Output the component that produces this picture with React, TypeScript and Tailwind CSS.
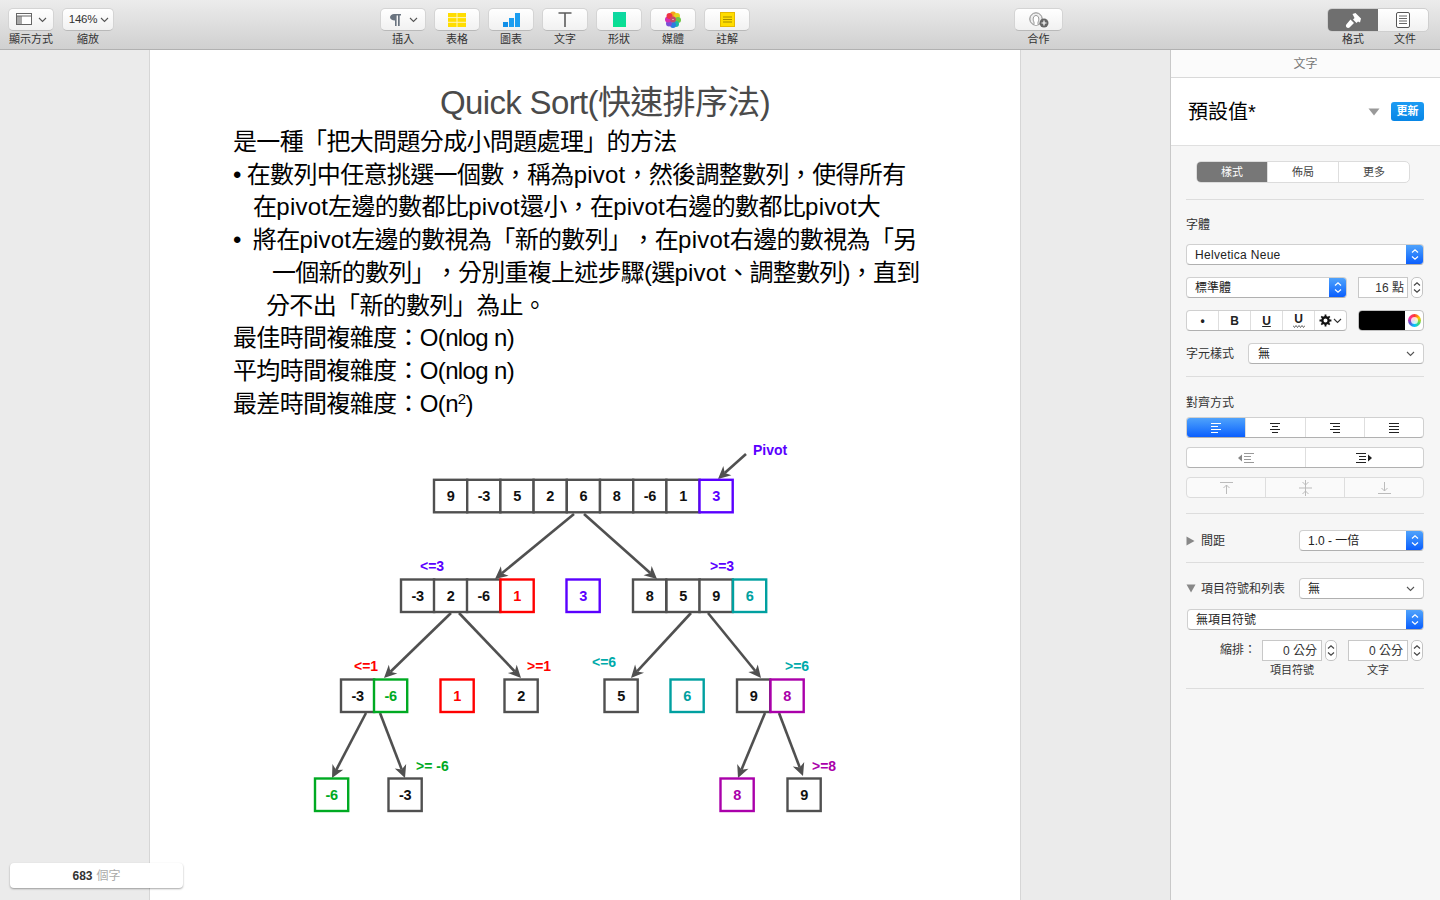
const Chevron = ({ className = "" }: { className?: string }) => (
  <svg width="9" height="6" viewBox="0 0 9 6" className={className}>
    <path d="M1 1l3.5 3.5L8 1" fill="none" stroke="currentColor" strokeWidth="1.1" />
  </svg>
);

const UpDown = ({ color = "#fff" }: { color?: string }) => (
  <svg width="8" height="13" viewBox="0 0 8 13">
    <path d="M1 4.5L4 1.8 7 4.5M1 8.5L4 11.2 7 8.5" fill="none" stroke={color} strokeWidth="1.2" />
  </svg>
);

const ToolButton = ({ label, children, w = "w-[46px]" }: { label: string; children: React.ReactNode; w?: string }) => (
  <div className={`flex flex-col items-center ${w}`}>
    <div className="flex h-[23px] w-full items-center justify-center gap-1 rounded-[5px] border border-[#d4d4d4] border-b-[#b9b9b9] bg-gradient-to-b from-white to-[#f1f1f1]">
      {children}
    </div>
    <span className="mt-[1px] whitespace-nowrap text-[11px] leading-[15px] text-[#333]">{label}</span>
  </div>
);

const Toolbar = () => (
  <div className="flex h-[50px] shrink-0 border-b border-[#b1b1b1] bg-gradient-to-b from-[#ececec] to-[#d0d0d0] pt-2 pl-2">
    <ToolButton label="顯示方式">
      <svg width="18" height="13" viewBox="0 0 18 13">
        <rect x="0.5" y="0.5" width="15" height="11" fill="#fff" stroke="#666" />
        <rect x="1" y="3" width="5" height="8" fill="#a9a9a9" />
        <path d="M1 3h14" stroke="#666" />
      </svg>
      <Chevron className="text-[#555]" />
    </ToolButton>
    <div className="ml-2">
      <ToolButton label="縮放" w="w-[52px]">
        <span className="ml-[2px] text-[11.500px] tracking-[-0.2px] text-[#333]">146%</span>
        <Chevron className="-ml-[1px] text-[#555]" />
      </ToolButton>
    </div>
    <div className="ml-[266px] flex gap-2">
      <ToolButton label="插入">
        <svg width="13" height="14" viewBox="0 0 13 14">
          <path d="M5 1h7v1.6h-1.3V13H9V2.6H7.6V13H6V7.4C3 7.4 1 6 1 4.2S3 1 5 1z" fill="#6a7480" />
        </svg>
        <Chevron className="ml-[3px] text-[#555]" />
      </ToolButton>
      <ToolButton label="表格">
        <svg width="18" height="14" viewBox="0 0 18 14">
          <rect width="18" height="14" fill="#ffdd00" />
          <path d="M0 4.6h18M0 9.3h18M9 0v14" stroke="#fff6b8" strokeWidth="1" />
        </svg>
      </ToolButton>
      <ToolButton label="圖表">
        <svg width="17" height="14" viewBox="0 0 17 14">
          <rect x="0" y="9" width="5" height="5" fill="#118fe8" />
          <rect x="6" y="5" width="5" height="9" fill="#1b9df0" />
          <rect x="12" y="0" width="5" height="14" fill="#1b9df0" />
        </svg>
      </ToolButton>
      <ToolButton label="文字">
        <svg width="14" height="15" viewBox="0 0 14 15">
          <path d="M0.5 1h13M7 1v14" stroke="#5c5c5c" strokeWidth="1.6" fill="none" />
        </svg>
      </ToolButton>
      <ToolButton label="形狀">
        <div className="h-[15px] w-[13px] bg-gradient-to-b from-[#0fd6a4] to-[#08e08f]" />
      </ToolButton>
      <ToolButton label="媒體">
        <svg width="16" height="17" viewBox="0 0 16 17">
          <circle cx="8" cy="3.5" r="3" fill="#f7a21b" />
          <circle cx="12" cy="5" r="3" fill="#e4d51f" />
          <circle cx="13" cy="9" r="3" fill="#6cc644" />
          <circle cx="11" cy="13" r="3" fill="#1fb6a6" />
          <circle cx="8" cy="14" r="3" fill="#2a7de1" />
          <circle cx="4" cy="12.5" r="3" fill="#7a4fd6" />
          <circle cx="3" cy="8.5" r="3" fill="#d32fb2" />
          <circle cx="4.5" cy="5" r="3" fill="#ee3344" />
          <circle cx="8" cy="8.5" r="3" fill="#c4486a" />
          <circle cx="8" cy="8.5" r="0.6" fill="#fff" />
        </svg>
      </ToolButton>
      <ToolButton label="註解">
        <svg width="15" height="15" viewBox="0 0 15 15">
          <rect x="0.5" y="0.5" width="14" height="14" fill="#ffdd00" stroke="#e6b800" />
          <path d="M3 5h9M3 7.5h9M3 10h9" stroke="#8f7a00" strokeWidth="0.8" />
        </svg>
      </ToolButton>
    </div>
    <div className="ml-[264px]">
      <ToolButton label="合作" w="w-[49px]">
        <svg width="20" height="16" viewBox="0 0 20 16">
          <circle cx="7" cy="7" r="6.2" fill="#eee" stroke="#888" />
          <path d="M5 13V10C3.5 8 4 3.5 7 3.5s3.5 4.5 2 6.500V13" fill="#fff" stroke="#999" />
          <circle cx="15" cy="11" r="4.500" fill="#666" />
          <path d="M12.500 11h5M15 8.500v5" stroke="#fff" strokeWidth="1.2" />
        </svg>
      </ToolButton>
    </div>
    <div className="ml-[264px] flex flex-col">
      <div className="flex h-[24px] w-[102px] overflow-hidden rounded-[5px] border border-[#cfcfcf] bg-gradient-to-b from-white to-[#f1f1f1]">
        <div className="flex w-[50px] items-center justify-center bg-[#6f6f6f]">
          <svg width="17" height="15" viewBox="0 0 17 15">
            <path d="M7.500 1l3-1 5.500 5.500-1 4-2-1-1.500 1.500-3.500-3.500 1.500-1.500zM5.500 6.500l3.500 3.500-4.500 4.500c-1 .8-2.200.6-3-.3-.8-1-.8-2 0-3z" fill="#fff" />
          </svg>
        </div>
        <div className="flex flex-1 items-center justify-center">
          <svg width="14" height="16" viewBox="0 0 14 16">
            <rect x="0.5" y="0.5" width="13" height="15" rx="1.500" fill="#fff" stroke="#555" />
            <path d="M3 4h8M3 6.500h8M3 9h8M3 11.500h8" stroke="#666" />
          </svg>
        </div>
      </div>
      <div className="flex w-[104px] text-[11px] leading-[15px] text-[#333]">
        <span className="w-[52px] text-center">格式</span>
        <span className="w-[52px] text-center">文件</span>
      </div>
    </div>
  </div>
);

// "pivot" runs a bit wider than the CJK around it
const Pv = () => <span className="tracking-[0.2px]">pivot</span>;

const GREY = "#505050";
const PURPLE = "#5a00ff";
const RED = "#ff0000";
const TEAL = "#00a0a0";
const GREEN = "#00aa22";
const MAGENTA = "#aa00aa";

type Cell = { x: number; y: number; t: string; c?: string };

const cells: Cell[] = [
  ...["9", "-3", "5", "2", "6", "8", "-6", "1"].map((t, i) => ({ x: 434 + i * 33.2, y: 479.8, t })),
  { x: 699.5, y: 479.8, t: "3", c: PURPLE },
  { x: 401, y: 579.5, t: "-3" },
  { x: 434, y: 579.5, t: "2" },
  { x: 467, y: 579.5, t: "-6" },
  { x: 500.5, y: 579.5, t: "1", c: RED },
  { x: 566.5, y: 579.5, t: "3", c: PURPLE },
  { x: 633, y: 579.5, t: "8" },
  { x: 666.5, y: 579.5, t: "5" },
  { x: 699.5, y: 579.5, t: "9" },
  { x: 733, y: 579.5, t: "6", c: TEAL },
  { x: 341, y: 679.5, t: "-3" },
  { x: 374, y: 679.5, t: "-6", c: GREEN },
  { x: 440.5, y: 679.5, t: "1", c: RED },
  { x: 504.5, y: 679.5, t: "2" },
  { x: 604.5, y: 679.5, t: "5" },
  { x: 670.5, y: 679.5, t: "6", c: TEAL },
  { x: 737, y: 679.5, t: "9" },
  { x: 770.5, y: 679.5, t: "8", c: MAGENTA },
  { x: 315, y: 778.5, t: "-6", c: GREEN },
  { x: 388.5, y: 778.5, t: "-3" },
  { x: 720.5, y: 778.5, t: "8", c: MAGENTA },
  { x: 787.5, y: 778.5, t: "9" },
];

const arrows = [
  [746, 454, 718, 479],
  [574, 514, 495, 579],
  [584, 514, 657, 579],
  [451, 613, 384, 678],
  [459, 613, 521, 678],
  [691, 613, 631, 678],
  [708, 613, 761, 678],
  [366, 713, 332, 778],
  [380, 713, 405, 778],
  [765, 713, 738, 778],
  [779, 713, 803, 776],
];

const notes = [
  { x: 753, y: 455, t: "Pivot", c: PURPLE },
  { x: 420, y: 570.5, t: "<=3", c: PURPLE },
  { x: 710, y: 570.5, t: ">=3", c: PURPLE },
  { x: 354, y: 670.5, t: "<=1", c: RED },
  { x: 527, y: 670.5, t: ">=1", c: RED },
  { x: 592, y: 666.5, t: "<=6", c: "#00aaaa" },
  { x: 785, y: 670.5, t: ">=6", c: "#00aaaa" },
  { x: 416, y: 770.5, t: ">= -6", c: GREEN },
  { x: 812, y: 770.5, t: ">=8", c: MAGENTA },
];

const Arrow = ({ a }: { a: number[] }) => {
  const [x1, y1, x2, y2] = a;
  const ang = Math.atan2(y2 - y1, x2 - x1);
  const head = (d: number) =>
    `${x2 - 14 * Math.cos(ang + d)},${y2 - 14 * Math.sin(ang + d)}`;
  const nx = x2 - 9 * Math.cos(ang);
  const ny = y2 - 9 * Math.sin(ang);
  return (
    <g>
      <line x1={x1} y1={y1} x2={nx} y2={ny} stroke={GREY} strokeWidth="2.6" />
      <polygon points={`${x2},${y2} ${head(0.45)} ${nx},${ny} ${head(-0.45)}`} fill={GREY} />
    </g>
  );
};

// the sort tree is a picture inside the document, viewBox keeps screen coordinates
const Diagram = () => (
  <svg width="870" height="400" viewBox="150 430 870 400" className="block font-['Liberation_Sans',sans-serif]">
    {arrows.map((a, i) => (
      <Arrow key={i} a={a} />
    ))}
    {[...cells]
      .sort((a, b) => (a.c ? 1 : 0) - (b.c ? 1 : 0))
      .map((c, i) => (
        <g key={i}>
          <rect x={c.x} y={c.y} width={33.2} height={32.5} fill="#fff" stroke={c.c ?? GREY} strokeWidth="2.4" />
          <text x={c.x + 16.6} y={c.y + 21} textAnchor="middle" fontSize="14.500" fontWeight="700" letterSpacing="-0.4" fill={c.c ?? "#111"}>
            {c.t}
          </text>
        </g>
      ))}
    {notes.map((n, i) => (
      <text key={i} x={n.x} y={n.y} fontSize="14" fontWeight="700" fill={n.c}>
        {n.t}
      </text>
    ))}
  </svg>
);

const Page = () => (
  <div className="h-full w-[872px] shrink-0 overflow-hidden border-x border-[#d6d6d6] bg-white">
    <div className="mt-[33px] pl-[40px] text-center text-[33px] leading-[40px] tracking-[-0.65px] text-[#4a4a4a]">
      Quick Sort(快速排序法)
    </div>
    <div className="mt-[3px] pl-[83px] text-[24px] leading-[32.700px] tracking-[-0.65px] text-black [text-spacing-trim:space-all]">
      <div className="whitespace-pre">是一種「把大問題分成小問題處理」的方法</div>
      <div className="whitespace-pre">• 在數列中任意挑選一個數，稱為<Pv />，然後調整數列，使得所有</div>
      <div className="whitespace-pre pl-[20px]">在<Pv />左邊的數都比<Pv />還小，在<Pv />右邊的數都比<Pv />大</div>
      <div className="whitespace-pre">•  將在<Pv />左邊的數視為「新的數列」，在<Pv />右邊的數視為「另</div>
      <div className="whitespace-pre pl-[39px] tracking-[-0.75px]">一個新的數列」，分別重複上述步驟(選<Pv />、調整數列)，直到</div>
      <div className="whitespace-pre pl-[33px]">分不出「新的數列」為止。</div>
      <div className="whitespace-pre">最佳時間複雜度：O(nlog n)</div>
      <div className="whitespace-pre">平均時間複雜度：O(nlog n)</div>
      <div className="whitespace-pre">
        最差時間複雜度：O(n<sup className="text-[15px] leading-none">2</sup>)
      </div>
    </div>
    <div className="mt-[10px]">
      <Diagram />
    </div>
  </div>
);

const Popup = ({ label, className = "", blue = true }: { label: string; className?: string; blue?: boolean }) => (
  <div className={`flex h-[21px] items-center overflow-hidden rounded-[4px] border border-[#d0d0d0] border-b-[#b0b0b0] bg-white text-[12px] text-[#222] ${className}`}>
    <span className="flex-1 pl-2 whitespace-nowrap">{label}</span>
    {blue ? (
      <div className="flex h-full w-[17px] items-center justify-center bg-gradient-to-b from-[#4fa2fb] to-[#0b5dfd]">
        <UpDown />
      </div>
    ) : (
      <Chevron className="mr-[8px] text-[#555]" />
    )}
  </div>
);

const Stepper = () => (
  <div className="flex h-[21px] w-[12px] items-center justify-center rounded-[5px] border border-[#c4c4c4] bg-white">
    <UpDown color="#444" />
  </div>
);

const Divider = ({ className = "" }: { className?: string }) => <div className={`h-px bg-[#dddddd] ${className}`} />;

const Seg = ({ children, className = "" }: { children?: React.ReactNode; className?: string }) => (
  <div className={`flex h-full flex-1 items-center justify-center border-l border-[#dedede] first:border-l-0 ${className}`}>
    {children}
  </div>
);

const AlignIcon = ({ d, color = "#222" }: { d: string; color?: string }) => (
  <svg width="12" height="10" viewBox="0 0 12 10">
    <path d={d} stroke={color} strokeWidth="1" fill="none" />
  </svg>
);

const Sidebar = () => (
  <div className="h-full w-[270px] shrink-0 overflow-hidden border-l border-[#c9c9c9] bg-[#f6f6f6]">
    <div className="flex h-[28px] items-center justify-center border-b border-[#d9d9d9] bg-[#fbfbfb] text-[12px] text-[#777]">文字</div>
    <div className="flex h-[68px] items-center border-b border-[#e0e0e0] bg-white pl-[17px] pr-[16px]">
      <span className="flex-1 text-[20px] text-black">預設值*</span>
      <svg width="12" height="8" viewBox="0 0 12 8" className="mr-[11px]">
        <path d="M0.500 0.500h11L6 7.500z" fill="#999" />
      </svg>
      <div className="flex h-[19px] w-[33px] items-center justify-center rounded-[3px] bg-gradient-to-b from-[#1c9bf3] to-[#0786e6] text-[11px] font-bold text-white">更新</div>
    </div>
    <div className="pl-[15px] pr-4">
      <div className="ml-[10px] mr-[14px] mt-[15px] flex h-[22px] overflow-hidden rounded-[5px] border border-[#dcdcdc] bg-white text-[11px] text-[#444]">
        <Seg className="bg-[#777] text-white">樣式</Seg>
        <Seg>佈局</Seg>
        <Seg>更多</Seg>
      </div>
      <Divider className="mt-[16px]" />
      <div className="mt-[16px] text-[12px] leading-[18px] text-[#333]">字體</div>
      <Popup label="Helvetica Neue" className="mt-[10px] tracking-[0.3px]" />
      <div className="mt-[12px] flex items-center">
        <Popup label="標準體" className="w-[161px]" />
        <div className="ml-[11px] flex h-[21px] w-[50px] items-center justify-end border border-[#c8c8c8] bg-white pr-[3px] text-[12px] text-[#333]">16 點</div>
        <div className="ml-[3px]"><Stepper /></div>
      </div>
      <div className="mt-[12px] flex items-center">
        <div className="flex h-[21px] w-[161px] overflow-hidden rounded-[4px] border border-[#d0d0d0] border-b-[#b0b0b0] bg-white text-[12px] font-bold text-[#222]">
          <Seg>•</Seg>
          <Seg>B</Seg>
          <Seg><span className="underline">U</span></Seg>
          <Seg>
            <span className="flex flex-col items-center leading-[11px]">
              U
              <svg width="12" height="3" viewBox="0 0 12 3">
                <path d="M0 .5l1.500 2L3 .5l1.500 2L6 .5l1.500 2L9 .5l1.500 2L12 .5" fill="none" stroke="#444" strokeWidth="0.8" />
              </svg>
            </span>
          </Seg>
          <Seg>
            <svg width="13" height="13" viewBox="0 0 13 13">
              <circle cx="6.500" cy="6.500" r="3.200" fill="none" stroke="#111" strokeWidth="2.400" />
              <path d="M6.500 0.500v12M0.500 6.500h12M2.300 2.300l8.400 8.400M10.700 2.300l-8.400 8.400" stroke="#111" strokeWidth="1.800" strokeDasharray="2.200 7.500" />
            </svg>
            <Chevron className="ml-[1px] text-[#333]" />
          </Seg>
        </div>
        <div className="ml-[11px] flex h-[21px] w-[66px] overflow-hidden rounded-[4px] border border-[#c0c0c0] bg-white">
          <div className="w-[46px] bg-black" />
          <div className="flex flex-1 items-center justify-center">
            <div className="flex h-[13px] w-[13px] items-center justify-center rounded-full bg-[conic-gradient(#ff3b30,#ffcc00,#4cd964,#00c7ff,#5856d6,#ff2d92,#ff3b30)]">
              <div className="h-[7px] w-[7px] rounded-full bg-white/80" />
            </div>
          </div>
        </div>
      </div>
      <div className="mt-[12px] flex items-center">
        <span className="w-[62px] text-[12px] text-[#333]">字元樣式</span>
        <Popup label="無" blue={false} className="flex-1 [&>span]:pl-[9px]" />
      </div>
      <Divider className="mt-[12px]" />
      <div className="mt-[17px] text-[12px] leading-[18px] text-[#333]">對齊方式</div>
      <div className="mt-[5px] flex h-[21px] overflow-hidden rounded-[4px] border border-[#d0d0d0] border-b-[#b0b0b0] bg-white">
        <Seg className="bg-gradient-to-b from-[#4fa2fb] to-[#0b5dfd]"><AlignIcon color="#fff" d="M1 .5h10M1 3.500h7M1 6.500h10M1 9.500h7" /></Seg>
        <Seg><AlignIcon d="M1 .5h10M3 3.500h6M1 6.500h10M3 9.500h6" /></Seg>
        <Seg><AlignIcon d="M1 .5h10M4 3.500h7M1 6.500h10M4 9.500h7" /></Seg>
        <Seg><AlignIcon d="M1 .5h10M1 3.500h10M1 6.500h10M1 9.500h10" /></Seg>
      </div>
      <div className="mt-[9px] flex h-[21px] overflow-hidden rounded-[4px] border border-[#d0d0d0] border-b-[#b0b0b0] bg-white">
        <Seg>
          <svg width="16" height="10" viewBox="0 0 16 10">
            <path d="M0 5l4-3.500v7z" fill="#888" />
            <path d="M6 .5h10M6 3.500h7M6 6.500h7M6 9.500h10" stroke="#999" />
          </svg>
        </Seg>
        <Seg>
          <svg width="16" height="10" viewBox="0 0 16 10">
            <path d="M16 5l-4-3.500v7z" fill="#222" />
            <path d="M0 .5h10M3 3.500h7M3 6.500h7M0 9.500h10" stroke="#222" />
          </svg>
        </Seg>
      </div>
      <div className="mt-[9px] flex h-[21px] overflow-hidden rounded-[4px] border border-[#dcdcdc] bg-[#fafafa]">
        <Seg>
          <svg width="13" height="12" viewBox="0 0 13 12"><path d="M0 .5h13M6.500 12V3M3.500 6l3-3 3 3" stroke="#bbb" fill="none" /></svg>
        </Seg>
        <Seg>
          <svg width="13" height="16" viewBox="0 0 13 16"><path d="M0 8h13M6.500 0v16M3.500 2l3 3 3-3M3.500 14l3-3 3 3" stroke="#bbb" fill="none" /></svg>
        </Seg>
        <Seg>
          <svg width="13" height="12" viewBox="0 0 13 12"><path d="M0 11.500h13M6.500 0v9M3.500 6l3 3 3-3" stroke="#bbb" fill="none" /></svg>
        </Seg>
      </div>
      <Divider className="mt-[15px]" />
      <div className="mt-[16px] flex items-center">
        <svg width="9" height="10" viewBox="0 0 9 10" className="mr-[6px]"><path d="M.5.500l8 4.500-8 4.500z" fill="#888" /></svg>
        <span className="w-[98px] text-[12px] text-[#333]">間距</span>
        <Popup label="1.0 - 一倍" className="flex-1" />
      </div>
      <Divider className="mt-[11px]" />
      <div className="mt-[15px] flex items-center">
        <svg width="10" height="9" viewBox="0 0 10 9" className="mr-[5px]"><path d="M.5.500h9L5 8.500z" fill="#888" /></svg>
        <span className="w-[98px] whitespace-nowrap text-[12px] text-[#333]">項目符號和列表</span>
        <Popup label="無" blue={false} className="flex-1" />
      </div>
      <div className="mt-[10px] pl-px">
        <Popup label="無項目符號" />
      </div>
      <div className="mt-[10px] flex items-start text-[12px] text-[#333]">
        <span className="w-[76px] pr-[6px] pt-[1px] text-right whitespace-nowrap">縮排：</span>
        <div className="flex flex-col items-center">
          <div className="flex items-center">
            <div className="flex h-[21px] w-[60px] items-center justify-end border border-[#c8c8c8] bg-white pr-[4px]">0 公分</div>
            <div className="ml-[3px]"><Stepper /></div>
          </div>
          <span className="-ml-[15px] mt-[1px] text-[11px] leading-[16px]">項目符號</span>
        </div>
        <div className="ml-[11px] flex flex-col items-center">
          <div className="flex items-center">
            <div className="flex h-[21px] w-[60px] items-center justify-end border border-[#c8c8c8] bg-white pr-[4px]">0 公分</div>
            <div className="ml-[3px]"><Stepper /></div>
          </div>
          <span className="-ml-[15px] mt-[1px] text-[11px] leading-[16px]">文字</span>
        </div>
      </div>
      <Divider className="mt-[10px]" />
    </div>
  </div>
);

const App = () => (
  <div className="relative flex h-[900px] w-[1440px] flex-col overflow-hidden bg-[#ebebeb] font-['Liberation_Sans','Noto_Sans_CJK_TC',sans-serif]">
    <Toolbar />
    <div className="flex min-h-0 flex-1">
      <div className="w-[149px] shrink-0" />
      <Page />
      <div className="flex-1" />
      <Sidebar />
    </div>
    <div className="absolute bottom-[12px] left-[10px] flex h-[25px] w-[173px] items-center justify-center gap-1 rounded-[4px] bg-white text-[12px] shadow-[0_1px_2px_rgba(0,0,0,0.35)]">
      <span className="font-bold text-[#333]">683</span>
      <span className="text-[#aaa]">個字</span>
    </div>
  </div>
);

export default App;
